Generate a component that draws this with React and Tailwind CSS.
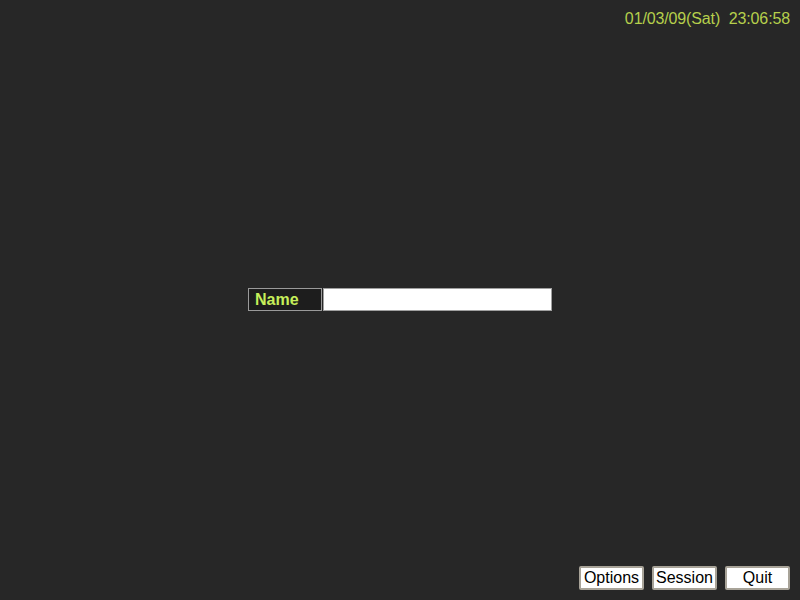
export default function App() {
  const font = { fontFamily: '"Liberation Sans", Arial, sans-serif' };
  return (
    <div className="w-[800px] h-[600px] bg-[#272727] flex flex-col overflow-hidden" style={font}>
      <div className="flex justify-end pr-[10px] pt-[10px] h-[28px]">
        <span className="text-[16px] leading-[18px] tracking-[-0.13px] text-[#b5cf4c] whitespace-pre">01/03/09(Sat)  23:06:58</span>
      </div>
      <div className="flex justify-center mt-[260px]">
        <div className="flex items-stretch h-[23px] gap-px">
          <div className="w-[74px] border border-[#9a9a9a] bg-[#1d1d1d] flex items-center pl-[6px]">
            <span className="text-[16px] font-bold leading-none text-[#c6ef5a]">Name</span>
          </div>
          <div className="w-[229px] bg-white border border-[#a0a0a0]" />
        </div>
      </div>
      <div className="flex-1" />
      <div className="flex justify-end gap-[8px] pr-[10px] pb-[10px]">
        {["Options", "Session", "Quit"].map((t) => (
          <div
            key={t}
            className="w-[65px] h-[24px] bg-white border-2 border-[#a8a398] rounded-[2px] flex items-center justify-center text-[16px] leading-none text-black"
          >
            {t}
          </div>
        ))}
      </div>
    </div>
  );
}
